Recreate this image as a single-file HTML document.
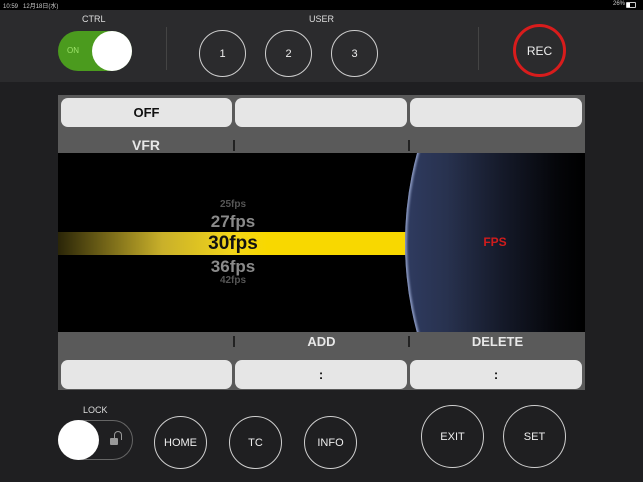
<!DOCTYPE html>
<html><head><meta charset="utf-8"><style>
*{margin:0;padding:0;box-sizing:border-box}
html,body{width:643px;height:482px;overflow:hidden}
body{background:#1f1f21;font-family:"Liberation Sans","Noto Sans CJK JP",sans-serif;position:relative;color:#fff}
.a{position:absolute}
.c{position:absolute;border:1.5px solid #cfcfcf;border-radius:50%;display:flex;align-items:center;justify-content:center;font-size:11px;color:#eee}
.btn{position:absolute;background:#e6e6e6;border-radius:7px;color:#111;display:flex;align-items:center;justify-content:center;font-size:13px;font-weight:bold}
.lbl{position:absolute;font-size:13px;font-weight:bold;color:#e8e8e8;text-align:center}
.fps{position:absolute;left:92px;width:166px;text-align:center;font-weight:bold}
</style></head><body>
<div class="a" style="left:0;top:0;width:643px;height:10px;background:#000"></div>
<div class="a" style="left:3px;top:1px;font-size:6px;color:#ccc">10:59&nbsp;&nbsp;&nbsp;12月18日(水)</div>
<div class="a" style="left:613px;top:1px;font-size:6px;color:#ccc">26%</div>
<div class="a" style="left:626px;top:2px;width:10px;height:6px;border:1px solid #ccc;border-radius:1px"><div style="width:3px;height:4px;background:#fff"></div></div>
<div class="a" style="left:0;top:10px;width:643px;height:72px;background:#2b2b2d"></div>
<div class="a" style="left:82px;top:14px;font-size:9px;color:#ddd">CTRL</div>
<div class="a" style="left:58px;top:31px;width:74px;height:40px;border-radius:20px;background:#4b9b1e"></div>
<div class="a" style="left:67px;top:46px;font-size:8px;color:#9de36a">ON</div>
<div class="a" style="left:92px;top:31px;width:40px;height:40px;border-radius:50%;background:#fff"></div>
<div class="a" style="left:309px;top:14px;font-size:9px;color:#ddd">USER</div>
<div class="a" style="left:166px;top:27px;width:1px;height:43px;background:#444"></div>
<div class="a" style="left:478px;top:27px;width:1px;height:43px;background:#444"></div>
<div class="c" style="left:199px;top:30px;width:47px;height:47px">1</div>
<div class="c" style="left:265px;top:30px;width:47px;height:47px">2</div>
<div class="c" style="left:331px;top:30px;width:47px;height:47px">3</div>
<div class="c" style="left:513px;top:24px;width:53px;height:53px;border:3px solid #d81c1c;font-size:12px">REC</div>

<div class="a" style="left:58px;top:95px;width:527px;height:295px;background:#5a5a5a;overflow:hidden">
 <div class="btn" style="left:3px;top:3px;width:171px;height:29px">OFF</div>
 <div class="btn" style="left:177px;top:3px;width:172px;height:29px"></div>
 <div class="btn" style="left:352px;top:3px;width:172px;height:29px"></div>
 <div class="lbl" style="left:0;top:42px;width:176px;font-size:14px">VFR</div>
 <div class="a" style="left:175px;top:45px;width:2px;height:11px;background:#222"></div>
 <div class="a" style="left:350px;top:45px;width:2px;height:11px;background:#222"></div>
 <div class="a" style="left:0;top:58px;width:527px;height:179px;background:#000;overflow:hidden">
  <div class="a" style="left:0;top:79px;width:348px;height:23px;background:linear-gradient(90deg,#2a2508 0%,#c9b02a 30%,#f2d51a 50%,#f8d800 60%)"></div>
  <div class="a" style="left:347px;top:-253px;width:686px;height:686px;border-radius:50%;background:linear-gradient(90deg,#2f3b60 0%,#28324f 6%,#151a2a 14%,#05060a 22%,#000 26%);box-shadow:inset 2px 0 2px #8a98c0"></div>
  <div class="fps" style="top:46px;font-size:10px;color:#555">25fps</div>
  <div class="fps" style="top:59px;font-size:17px;color:#8a8a8a">27fps</div>
  <div class="fps" style="top:80px;font-size:19px;color:#111">30fps</div>
  <div class="fps" style="top:104px;font-size:17px;color:#8a8a8a">36fps</div>
  <div class="fps" style="top:122px;font-size:10px;color:#555">42fps</div>
  <div class="a" style="left:412px;top:82px;width:50px;text-align:center;font-size:12px;font-weight:bold;color:#d01c1c">FPS</div>
 </div>
 <div class="a" style="left:175px;top:241px;width:2px;height:11px;background:#222"></div>
 <div class="a" style="left:350px;top:241px;width:2px;height:11px;background:#222"></div>
 <div class="lbl" style="left:177px;top:239px;width:173px;font-size:13px">ADD</div>
 <div class="lbl" style="left:352px;top:239px;width:175px;font-size:13px">DELETE</div>
 <div class="btn" style="left:3px;top:265px;width:171px;height:29px"></div>
 <div class="btn" style="left:177px;top:265px;width:172px;height:29px">:</div>
 <div class="btn" style="left:352px;top:265px;width:172px;height:29px">:</div>
</div>

<div class="a" style="left:83px;top:405px;font-size:9px;color:#ddd">LOCK</div>
<div class="a" style="left:58px;top:420px;width:75px;height:40px;border-radius:20px;border:1px solid #666"></div>
<div class="a" style="left:58px;top:420px;width:41px;height:40px;border-radius:50%;background:#fff"></div>
<div class="a" style="left:110px;top:438px;width:8px;height:7px;background:#999;border-radius:1px"></div>
<div class="a" style="left:114px;top:431px;width:8px;height:9px;border:1.5px solid #999;border-bottom:none;border-radius:4px 4px 0 0"></div>
<div class="c" style="left:154px;top:416px;width:53px;height:53px">HOME</div>
<div class="c" style="left:229px;top:416px;width:53px;height:53px">TC</div>
<div class="c" style="left:304px;top:416px;width:53px;height:53px">INFO</div>
<div class="c" style="left:421px;top:405px;width:63px;height:63px">EXIT</div>
<div class="c" style="left:503px;top:405px;width:63px;height:63px">SET</div>
</body></html>
